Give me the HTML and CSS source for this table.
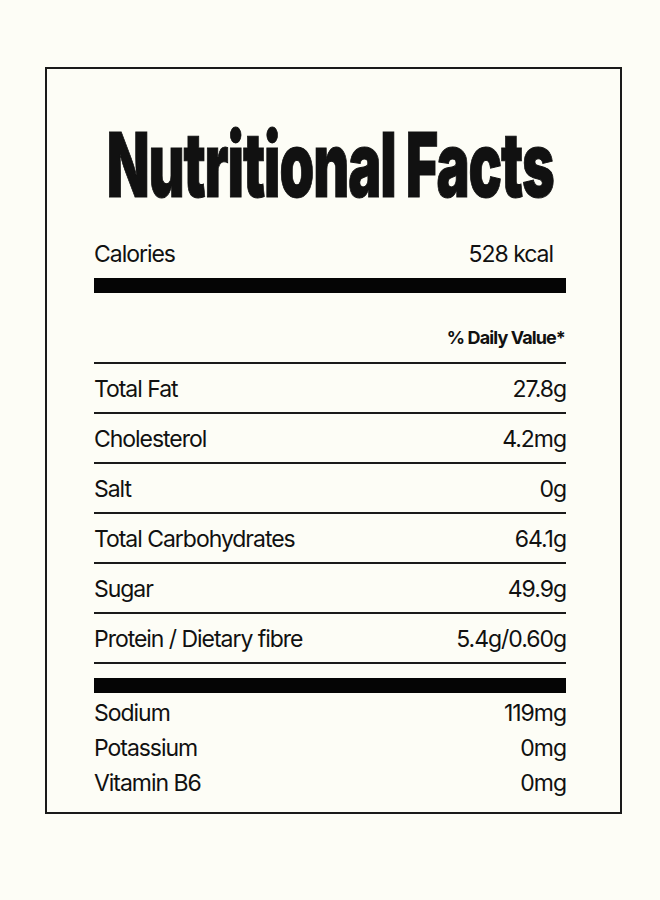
FILE: index.html
```html
<!DOCTYPE html>
<html lang="en">
<head>
<meta charset="utf-8">
<title>Nutritional Facts</title>
<link rel="stylesheet" href="styles.css">
</head>
<body>
<div class="card">
  <h1 class="title"><span class="title-text">Nutritional Facts</span></h1>
  <div class="calories">
    <span>Calories</span>
    <span>528 kcal</span>
  </div>
  <div class="bar"></div>
  <div class="dv">% Daily Value*</div>
  <div class="rows">
    <div class="row"><span>Total Fat</span><span>27.8g</span></div>
    <div class="row"><span>Cholesterol</span><span>4.2mg</span></div>
    <div class="row"><span>Salt</span><span>0g</span></div>
    <div class="row"><span>Total Carbohydrates</span><span>64.1g</span></div>
    <div class="row"><span>Sugar</span><span>49.9g</span></div>
    <div class="row"><span>Protein / Dietary fibre</span><span>5.4g/0.60g</span></div>
  </div>
  <div class="bar bar-low"></div>
  <div class="minor">
    <div class="mrow"><span>Sodium</span><span>119mg</span></div>
    <div class="mrow"><span>Potassium</span><span>0mg</span></div>
    <div class="mrow"><span>Vitamin B6</span><span>0mg</span></div>
  </div>
</div>
</body>
</html>
```
FILE: styles.css
```css
html, body {
  margin: 0;
  padding: 0;
  background: #fdfdf6;
}
body {
  font-family: Inter, "Noto Sans", sans-serif;
  color: #111;
}
.card {
  box-sizing: border-box;
  width: 577px;
  height: 747px;
  margin: 67px 0 0 45px;
  border: 2px solid #1a1a1a;
  padding: 52px 54px 0 47px;
}
.title {
  margin: 0;
  display: flex;
  justify-content: center;
  font-size: 87px;
  line-height: 1;
  font-weight: 900;
  letter-spacing: -0.02em;
  white-space: nowrap;
}
.title-text {
  display: inline-block;
  flex: none;
  transform: scale(0.64, 1.03);
  transform-origin: center;
  -webkit-text-stroke: 1px #111;
}
.calories {
  display: flex;
  justify-content: space-between;
  margin-top: 32px;
  padding-right: 13px;
  font-size: 23px;
  line-height: 28px;
  letter-spacing: -0.045em;
}
.bar {
  height: 15px;
  background: #050505;
  margin-top: 10px;
}
.dv {
  margin-top: 35px;
  text-align: right;
  font-size: 18px;
  line-height: 20px;
  font-weight: 700;
  letter-spacing: -0.05em;
  padding-right: 1px;
}
.rows {
  margin-top: 14px;
}
.row {
  display: flex;
  justify-content: space-between;
  border-top: 2px solid #1a1a1a;
  height: 46px;
  padding-top: 2px;
  font-size: 23px;
  line-height: 46px;
  letter-spacing: -0.045em;
}
.row:last-child {
  border-bottom: 2px solid #1a1a1a;
}
.bar-low {
  margin-top: 14px;
}
.minor {
  margin-top: 3px;
}
.mrow {
  display: flex;
  justify-content: space-between;
  font-size: 23px;
  line-height: 35px;
  letter-spacing: -0.045em;
}
```
